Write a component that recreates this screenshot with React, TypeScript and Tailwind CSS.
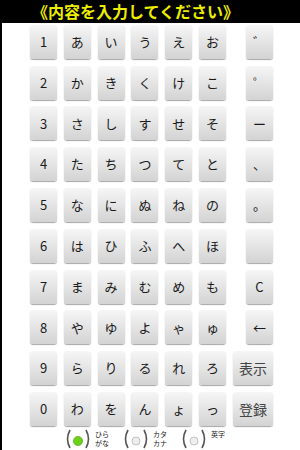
import React from "react";

const rows: string[][] = [
  ["1", "あ", "い", "う", "え", "お", "゛"],
  ["2", "か", "き", "く", "け", "こ", "゜"],
  ["3", "さ", "し", "す", "せ", "そ", "ー"],
  ["4", "た", "ち", "つ", "て", "と", "、"],
  ["5", "な", "に", "ぬ", "ね", "の", "。"],
  ["6", "は", "ひ", "ふ", "へ", "ほ", ""],
  ["7", "ま", "み", "む", "め", "も", "C"],
  ["8", "や", "ゆ", "よ", "ゃ", "ゅ", "←"],
  ["9", "ら", "り", "る", "れ", "ろ", "表示"],
  ["0", "わ", "を", "ん", "ょ", "っ", "登録"],
];

const keyCls =
  "flex items-center justify-center h-[34px] rounded-[3px] bg-gradient-to-b from-[#f6f6f6] to-[#d3d3d3] shadow-[0_1px_1px_rgba(0,0,0,0.35)] text-[#1a1a1a] text-[13px]";

function Radio({ on, label }: { on?: boolean; label: React.ReactNode }) {
  return (
    <div className="flex items-start">
      <svg width="26" height="22" viewBox="0 0 26 22">
        <path d="M5 2 Q0 11 5 20" stroke="#555" strokeWidth="1.6" fill="none" />
        <path d="M21 2 Q26 11 21 20" stroke="#555" strokeWidth="1.6" fill="none" />
        {on ? (
          <circle cx="13" cy="13" r="4.6" fill="#6cd11a" stroke="#4a9d10" strokeWidth="0.6" />
        ) : (
          <circle cx="13" cy="13" r="4" fill="#eeeeee" stroke="#b5b5b5" strokeWidth="0.8" />
        )}
      </svg>
      <div className="ml-[4px] mt-[2px] text-[7px] leading-[9px] text-[#222]">{label}</div>
    </div>
  );
}

export default function App() {
  return (
    <div
      className="w-[300px] h-[450px] bg-black flex flex-col overflow-hidden"
      style={{ fontFamily: '"Noto Sans CJK JP", "DejaVu Sans", sans-serif' }}
    >
      {/* Title */}
      <div className="h-[24px] flex items-center pl-[32px] text-[#eded00] text-[16px] font-bold leading-none">
        《内容を入力してください》
      </div>

      {/* Keyboard */}
      <div className="flex-1 ml-[2px] bg-white flex flex-col pt-[2px]">
        <div className="flex flex-col gap-[6.8px] ml-[28px] w-[243px]">
          {rows.map((row, i) => (
            <div key={i} className="flex gap-[6.8px]">
              {row.slice(0, 6).map((k, j) => (
                <div key={j} className={`${keyCls} w-[27px]`}>
                  {k}
                </div>
              ))}
              {i >= 8 ? (
                <div className={`${keyCls} w-[40px] ml-auto text-[14px] text-[#444]`}>{row[6]}</div>
              ) : (
                <div className={`${keyCls} w-[27px] ml-auto`}>{row[6]}</div>
              )}
            </div>
          ))}
        </div>

        {/* Mode radios */}
        <div className="flex gap-[14px] ml-[63px] mt-[2px]">
          <Radio on label={<>ひら<br />がな</>} />
          <Radio label={<>カタ<br />カナ</>} />
          <Radio label="英字" />
        </div>
      </div>
    </div>
  );
}
